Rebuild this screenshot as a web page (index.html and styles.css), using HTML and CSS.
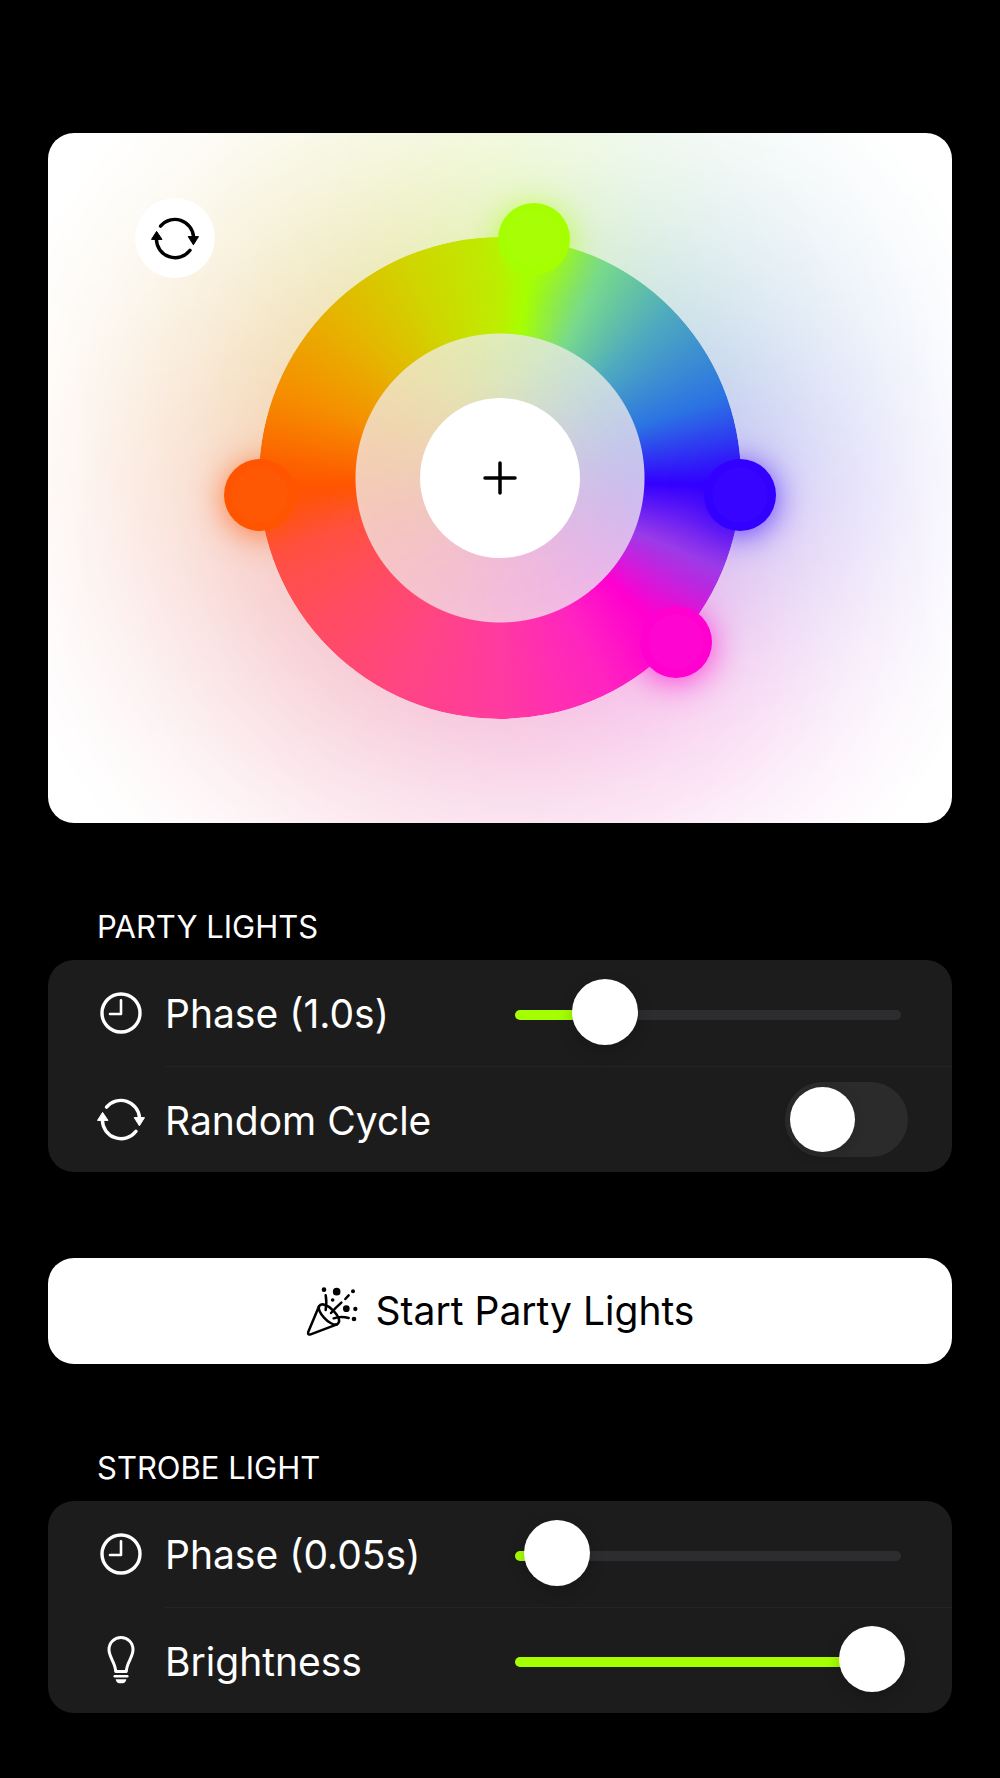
FILE: index.html
```html
<!DOCTYPE html>
<html lang="en">
<head>
<meta charset="utf-8">
<meta name="viewport" content="width=device-width, initial-scale=1">
<title>Party Lights</title>
<link rel="stylesheet" href="styles.css">
</head>
<body>
<svg class="sprite" aria-hidden="true">
  <symbol id="cycle" viewBox="0 0 48 48">
    <g fill="none" stroke="currentColor" stroke-width="3.4" stroke-linecap="round">
      <path d="M9.5 12.2A18.7 18.7 0 0 1 42.6 23"/>
      <path d="M5.4 25A18.7 18.7 0 0 0 39 36.3"/>
    </g>
    <g fill="currentColor" stroke="currentColor" stroke-linejoin="round">
      <path d="M37.2 22.6H47.5L42.4 30.8Z"/>
      <path d="M0.5 25.4H11L5.6 17.4Z"/>
    </g>
  </symbol>
  <symbol id="clock" viewBox="0 0 48 48">
    <g fill="none" stroke="currentColor" stroke-linecap="round" stroke-linejoin="round">
      <circle cx="24" cy="24" r="19" stroke-width="3.4"/>
      <path d="M24 11.2V25H13" stroke-width="2.6"/>
    </g>
  </symbol>
  <symbol id="bulb" viewBox="0 0 48 48">
    <path d="M18.7 35.4C18.2 26 12 21.5 12 13.6C12 6.7 17.3 1.6 24 1.6S36 6.7 36 13.6C36 21.5 29.8 26 29.3 35.4Z" fill="none" stroke="currentColor" stroke-width="3" stroke-linejoin="round"/>
    <path d="M17.7 40.3H30.3" stroke="currentColor" stroke-width="2.4" stroke-linecap="round"/>
    <path d="M18.6 43.2H29.4Q28.5 47.2 25.5 47.2H22.5Q19.5 47.2 18.6 43.2Z" fill="currentColor"/>
  </symbol>
</svg>

<main class="screen">
  <section class="palette" aria-label="Colours">
    <button class="round shuffle" aria-label="Shuffle colours"><svg class="icon"><use href="#cycle"/></svg></button>
    <div class="wheel">
      <div class="glow"></div>
      <div class="ring"></div>
      <button class="round add" aria-label="Add colour">
        <svg class="plus" viewBox="0 0 34 34"><path d="M17 2V32M2 17H32" stroke="currentColor" stroke-width="3.5" stroke-linecap="round"/></svg>
      </button>
      <button class="handle" aria-label="Green" style="--angle: 8deg; --color: #a6ff00"></button>
      <button class="handle" aria-label="Blue" style="--angle: 94deg; --color: #3300ff"></button>
      <button class="handle" aria-label="Magenta" style="--angle: 133deg; --color: #ff00d0"></button>
      <button class="handle" aria-label="Orange" style="--angle: 266deg; --color: #ff5500"></button>
    </div>
  </section>

  <section>
    <h2 class="heading">PARTY LIGHTS</h2>
    <div class="group">
      <div class="row">
        <svg class="icon"><use href="#clock"/></svg>
        <div class="body">
          <label for="party-phase">Phase (1.0s)</label>
          <div class="slider" style="--value: 19%"><input id="party-phase" type="range" min="0" max="1000" value="186"></div>
        </div>
      </div>
      <div class="row">
        <svg class="icon"><use href="#cycle"/></svg>
        <div class="body">
          <label for="random">Random Cycle</label>
          <input id="random" class="switch" type="checkbox">
        </div>
      </div>
    </div>
  </section>

  <button class="start">
    <svg class="popper" viewBox="45 45 156 153" fill="none" stroke="currentColor" stroke-width="7.5" stroke-linecap="round" stroke-linejoin="round">
      <path d="M84 106L52 182Q48 193 59 190L138 160"/>
      <path d="M84 106C90 95 108 100 126 118C144 136 150 153 138 160C129 163 112 155 99 140C87 126 82 112 84 106Z"/>
      <path d="M104 73Q108 92 104 117M120 126Q136 108 151 95M163 84L173 73M128 142Q150 134 173 141"/>
      <g fill="currentColor" stroke="none">
        <circle cx="99" cy="56" r="7"/><circle cx="137" cy="62" r="11.5"/><circle cx="186" cy="61" r="6"/><circle cx="125" cy="87" r="5.5"/><circle cx="166" cy="113" r="10"/><circle cx="193" cy="114" r="6.5"/><circle cx="189" cy="144" r="7"/>
      </g>
    </svg>
    Start Party Lights
  </button>

  <section>
    <h2 class="heading">STROBE LIGHT</h2>
    <div class="group">
      <div class="row">
        <svg class="icon"><use href="#clock"/></svg>
        <div class="body">
          <label for="strobe-phase">Phase (0.05s)</label>
          <div class="slider" style="--value: 4%"><input id="strobe-phase" type="range" min="0" max="1000" value="38"></div>
        </div>
      </div>
      <div class="row">
        <svg class="icon"><use href="#bulb"/></svg>
        <div class="body">
          <label for="brightness">Brightness</label>
          <div class="slider" style="--value: 100%"><input id="brightness" type="range" min="0" max="1000" value="1000"></div>
        </div>
      </div>
    </div>
  </section>
</main>
</body>
</html>
```

FILE: styles.css
```css
:root {
  --accent: #a6ff00;
  --surface: #1c1c1c;
  --radius: 26px;
  --spectrum: conic-gradient(
    #bdee00 0deg, #a6ff00 8deg, #78d98c 26deg, #4fabbe 45deg, #2b73e3 70deg,
    #3300ff 92deg, #9b3be8 112deg, #ff00d0 133deg, #ff24c0 153deg,
    #ff3aa0 180deg, #ff4680 208deg, #ff4c60 232deg, #ff5040 252deg,
    #ff5500 267deg, #f58f00 292deg, #e5b500 315deg, #d0d500 337deg, #bdee00 360deg);
}

* { box-sizing: border-box; }

body {
  margin: 0;
  background: #000;
  color: #fff;
  font: 39px/48px Inter, "Liberation Sans", sans-serif;
}

button {
  border: 0;
  padding: 0;
  font: inherit;
  color: #000;
  background: #fff;
}

.sprite { position: absolute; width: 0; height: 0; }
.icon { width: 48px; height: 48px; flex: none; }

.screen {
  display: flex;
  flex-direction: column;
  gap: 86px;
  padding: 133px 48px 64px;
}

.palette {
  position: relative;
  display: grid;
  place-items: center;
  padding: 104px 0;
  border-radius: var(--radius);
  background: #fff;
  overflow: hidden;
}

.round {
  display: grid;
  place-items: center;
  border-radius: 50%;
}

.shuffle {
  position: absolute;
  z-index: 1;
  top: 65px;
  left: 87px;
  width: 80px;
  height: 80px;
}

.wheel {
  position: relative;
  display: grid;
  grid-template: 100% / 100%;
  place-items: center;
  width: 482px;
  height: 482px;
}

.wheel > .ring, .wheel > .add { grid-area: 1 / 1; }

.glow {
  position: absolute;
  inset: -280px;
  background: var(--spectrum);
  filter: blur(60px) brightness(0.88);
  mask: radial-gradient(closest-side,
    rgb(0 0 0 / 0.34) 0%, rgb(0 0 0 / 0.32) 25%, rgb(0 0 0 / 0.25) 47%,
    rgb(0 0 0 / 0.15) 63%, rgb(0 0 0 / 0.07) 78%, rgb(0 0 0 / 0.03) 88%, transparent 100%);
}

.ring {
  position: relative;
  width: 100%;
  height: 100%;
  border-radius: 50%;
  background: var(--spectrum);
  mask: radial-gradient(circle, transparent 144px, #000 145px);
}

.add { position: relative; width: 160px; height: 160px; }
.plus { width: 34px; height: 34px; }

.handle {
  position: absolute;
  left: calc(50% - 36px + 241px * sin(var(--angle)));
  top: calc(50% - 36px - 241px * cos(var(--angle)));
  width: 72px;
  height: 72px;
  border-radius: 50%;
  background: radial-gradient(circle, rgb(255 255 255 / 0.02) 27px, transparent 28px) var(--color);
  box-shadow: 0 4px 32px color-mix(in srgb, var(--color) 70%, transparent);
}

.heading {
  margin: 0 0 15px;
  padding-left: 49px;
  font-size: 31px;
  font-weight: 400;
  line-height: 36px;
}

.group {
  border-radius: var(--radius);
  background: var(--surface);
}

.row {
  display: flex;
  align-items: center;
  gap: 20px;
  padding-left: 49px;
}

.body {
  flex: 1;
  display: flex;
  align-items: center;
  justify-content: space-between;
  height: 106px;
  padding-right: 44px;
}

.body label { padding-top: 2px; }

.row + .row .body { border-top: 1px solid #232323; }

.slider {
  display: grid;
  align-items: center;
  width: 53%;
  margin-right: 3px;
}

.slider::before {
  content: "";
  grid-area: 1 / 1;
  height: 10px;
  margin: 3px 4px 0;
  border-radius: 5px;
  background: linear-gradient(to right, var(--accent) var(--value), #2d2d30 var(--value));
}

.slider input {
  grid-area: 1 / 1;
  appearance: none;
  width: 100%;
  height: 66px;
  margin: 0 0 3px;
  background: none;
}

.slider input::-webkit-slider-thumb {
  appearance: none;
  width: 66px;
  height: 66px;
  border-radius: 50%;
  background: #fff;
  box-shadow: 0 6px 16px rgb(0 0 0 / 0.2);
}

.switch {
  appearance: none;
  width: 123px;
  height: 75px;
  margin: 0;
  padding: 5px;
  border-radius: 38px;
  background: #2b2b2b;
}

.switch::before {
  content: "";
  display: block;
  width: 65px;
  height: 65px;
  border-radius: 50%;
  background: #fff;
  box-shadow: 0 4px 12px rgb(0 0 0 / 0.15);
}

.switch:checked { background: var(--accent); }
.switch:checked::before { margin-left: auto; }

.start {
  display: flex;
  align-items: center;
  justify-content: center;
  gap: 18px;
  height: 106px;
  border-radius: var(--radius);
}

.popper { width: 52px; height: 51px; }
```
